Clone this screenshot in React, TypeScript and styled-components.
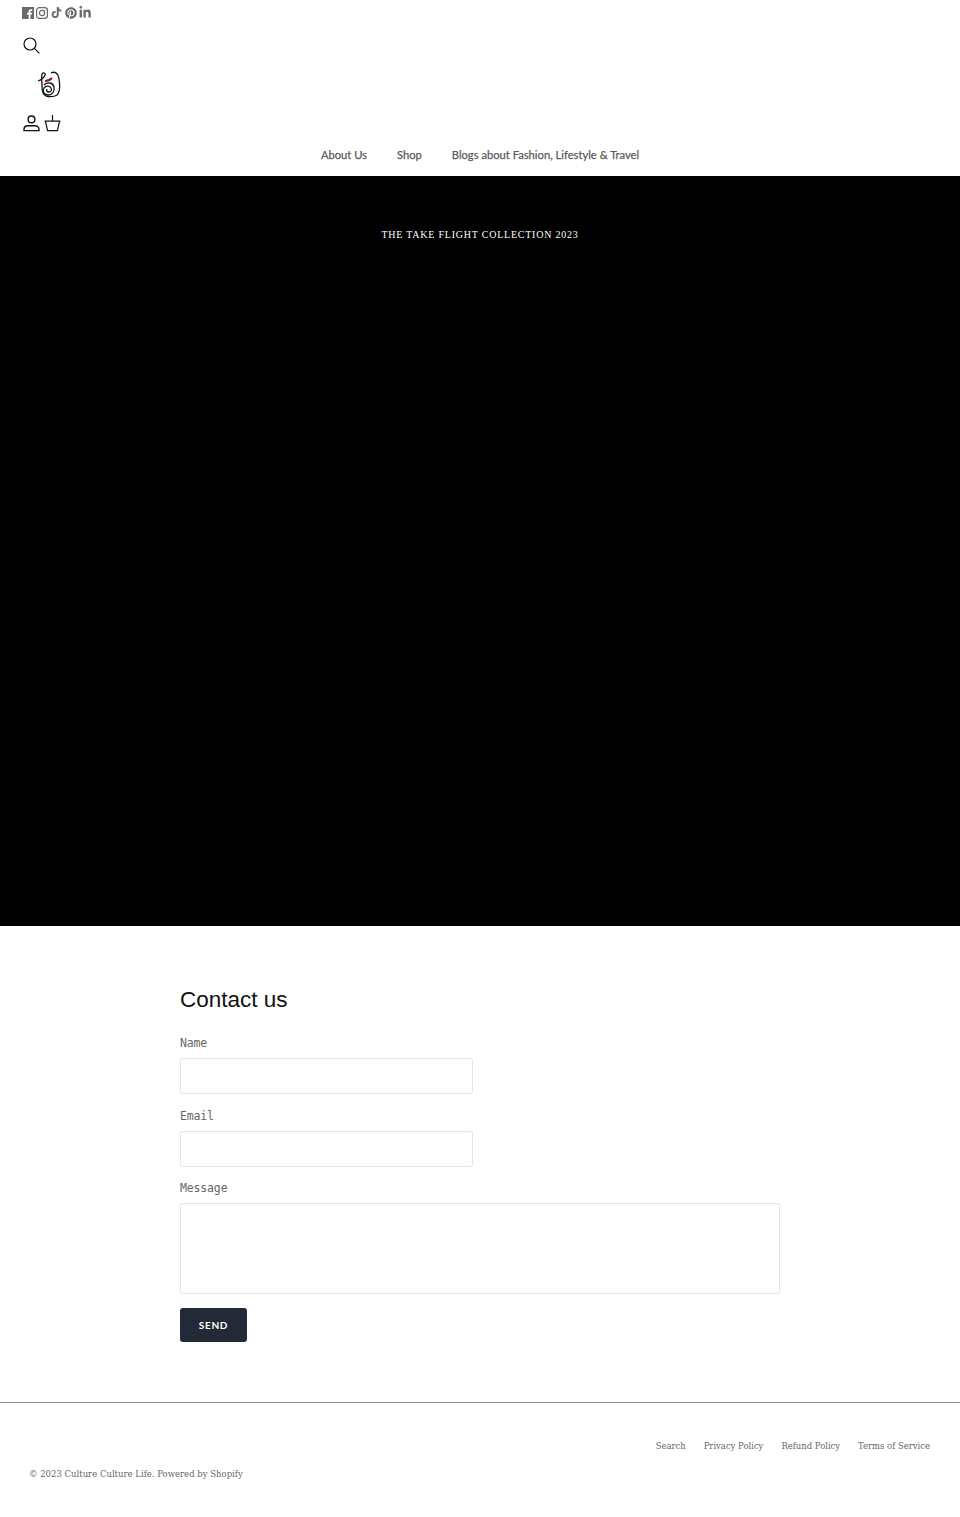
import React from 'react';
import styled, { createGlobalStyle } from 'styled-components';
import { FaTiktok, FaPinterest, FaLinkedinIn } from 'react-icons/fa';

const Global = createGlobalStyle`
  html, body { margin: 0; padding: 0; background: #fff; }
  * { box-sizing: border-box; }
`;
const Page = styled.div`width: 960px; min-height: 1517px; display: flex; flex-direction: column;`;
const Header = styled.header`display: flex; flex-direction: column; height: 176px; padding: 5px 22px 0;`;
const Socials = styled.div`display: flex; align-items: center; gap: 2px; height: 15px; color: #6a6a6a;`;
const SocialIcon = styled.span`display: flex; width: 12.2px; justify-content: center; font-size: 13px;`;
const SearchRow = styled.div`display: flex; margin-top: 17px; padding-left: 1px; height: 18px; color: #111;`;
const LogoRow = styled.div`display: flex; margin-top: 16px; padding-left: 15px; height: 27px;`;
const AccountRow = styled.div`display: flex; gap: 4px; margin-top: 17px; padding-left: 1px; height: 20px; color: #111;`;
const Nav = styled.nav`display: flex; justify-content: center; gap: 30px; margin-top: 12px; font: 11.2px/16px "Lato", sans-serif; color: #5c5c5c; -webkit-text-stroke: 0.25px #5c5c5c;`;
const NavLink = styled.a`white-space: nowrap;`;
const Hero = styled.section`height: 750px; background: #000; display: flex; justify-content: center; padding-top: 52px;`;
const HeroTitle = styled.p`margin: 0; color: #fff; font: 10px/13px "Liberation Serif", serif; letter-spacing: 0.77px; white-space: nowrap;`;
const Main = styled.main`width: 600px; margin: 0 auto; padding-top: 60px; height: 476px; display: flex; flex-direction: column;`;
const Title = styled.h1`margin: 0 0 21px; font: 400 22.5px/28px "Liberation Sans", sans-serif; color: #111;`;
const Label = styled.label`display: block; font: 11.5px/16px "DejaVu Sans Mono", monospace; color: #666; margin-bottom: 7px; letter-spacing: -0.15px;`;
const Input = styled.input`display: block; width: 293px; height: 36px; border: 1px solid #e6e6e6; border-radius: 2px; background: #fff; margin-bottom: 13.6px; outline: none;`;
const TextArea = styled.textarea`display: block; width: 600px; height: 91px; border: 1px solid #e6e6e6; border-radius: 2px; background: #fff; margin: 0 0 14px; resize: none; outline: none;`;
const Send = styled.button`width: 67px; height: 34px; border: none; border-radius: 3px; background: #212a36; color: #fff; font: 700 10px/34px "Lato", sans-serif; letter-spacing: 0.7px; padding: 0;`;
const Footer = styled.footer`border-top: 1px solid #8a8a8a; padding: 35px 30px 0; display: flex; flex-direction: column; gap: 13px; height: 115px;`;
const FooterLinks = styled.div`display: flex; justify-content: flex-end; gap: 18px;`;
const FooterLink = styled.a`font: 8.45px/16px "DejaVu Serif", serif; color: #666; white-space: nowrap;`;
const Copy = styled.p`margin: 0 0 0 -1px; font: 8.5px/14px "DejaVu Serif", serif; color: #666; white-space: nowrap;`;

const FacebookIcon = () => (
  <svg width="12" height="12" viewBox="0 0 12 12">
    <path fill="currentColor" fillRule="evenodd" d="M0 0h12v12H8.400V7.600h1.500l.2-1.800H8.400V4.700c0-.5.2-.8.9-.8h.9V2.300C10 2.300 9.500 2.200 8.900 2.200c-1.400 0-2.300.8-2.300 2.300v1.300H5v1.800h1.600V12H0z" />
  </svg>
);
const InstaIcon = () => (
  <svg width="12" height="12" viewBox="0 0 12 12" fill="none" stroke="currentColor" strokeWidth="1.2">
    <rect x="0.6" y="0.6" width="10.8" height="10.8" rx="2.6" />
    <circle cx="6" cy="6" r="2.6" />
    <circle cx="9" cy="3" r="0.6" fill="currentColor" stroke="none" />
  </svg>
);
const SearchIcon = () => (
  <svg width="17" height="17" viewBox="0 0 17 17" fill="none" stroke="currentColor" strokeWidth="1.2">
    <circle cx="7" cy="7" r="6" />
    <path d="M11.300 11.300l5 5" />
  </svg>
);
const UserIcon = () => (
  <svg width="17" height="17" viewBox="0 0 17 17" fill="none" stroke="currentColor" strokeWidth="1.4">
    <circle cx="8.5" cy="4.4" r="3.4" />
    <path d="M1 15.600h15v-1.200c0-2.200-1.800-3.600-4-3.600H5c-2.200 0-4 1.400-4 3.600z" />
  </svg>
);
const BasketIcon = () => (
  <svg width="17" height="17" viewBox="0 0 17 17" fill="none" stroke="currentColor" strokeWidth="1.2">
    <path d="M8.500 0v6" />
    <path d="M.6 6.200h15.800M1.400 6.200l2.200 9.400h9.800l2.200-9.400" />
  </svg>
);
const Logo = () => (
  <svg width="24" height="27" viewBox="0 0 24 27" fill="none" stroke="#141414" strokeWidth="1.3">
    <path d="M1 10c3-1 6-3 7-6 1-2-2-3-3-1-1 3 0 7 0 12 0 5 1 9 4 10" />
    <path d="M14 2c4-2 7 0 8 6 1 6 1 13-2 16-3 2-7 2-11 1" />
    <path d="M7 14c4-4 9-2 10 2 1 5-2 8-6 8-4 0-6-4-4-7 2-3 6-2 7 0 1 2 0 4-2 4-2 0-3-1-2-3" />
    <path d="M8 10c2 0 5-1 7-3" stroke="#7a2033" strokeWidth="2.2" />
  </svg>
);

export default function App() {
  return (
    <Page>
      <Global />
      <Header>
        <Socials>
          <SocialIcon><FacebookIcon /></SocialIcon>
          <SocialIcon><InstaIcon /></SocialIcon>
          <SocialIcon><FaTiktok size={11} /></SocialIcon>
          <SocialIcon><FaPinterest size={12} /></SocialIcon>
          <SocialIcon><FaLinkedinIn /></SocialIcon>
        </Socials>
        <SearchRow><SearchIcon /></SearchRow>
        <LogoRow><Logo /></LogoRow>
        <AccountRow><UserIcon /><BasketIcon /></AccountRow>
        <Nav>
          <NavLink>About Us</NavLink>
          <NavLink>Shop</NavLink>
          <NavLink>Blogs about Fashion, Lifestyle &amp; Travel</NavLink>
        </Nav>
      </Header>
      <Hero><HeroTitle>THE TAKE FLIGHT COLLECTION 2023</HeroTitle></Hero>
      <Main>
        <Title>Contact us</Title>
        <Label>Name</Label>
        <Input />
        <Label>Email</Label>
        <Input />
        <Label>Message</Label>
        <TextArea />
        <div><Send>SEND</Send></div>
      </Main>
      <Footer>
        <FooterLinks>
          <FooterLink>Search</FooterLink>
          <FooterLink>Privacy Policy</FooterLink>
          <FooterLink>Refund Policy</FooterLink>
          <FooterLink>Terms of Service</FooterLink>
        </FooterLinks>
        <Copy>© 2023 Culture Culture Life. Powered by Shopify</Copy>
      </Footer>
    </Page>
  );
}
